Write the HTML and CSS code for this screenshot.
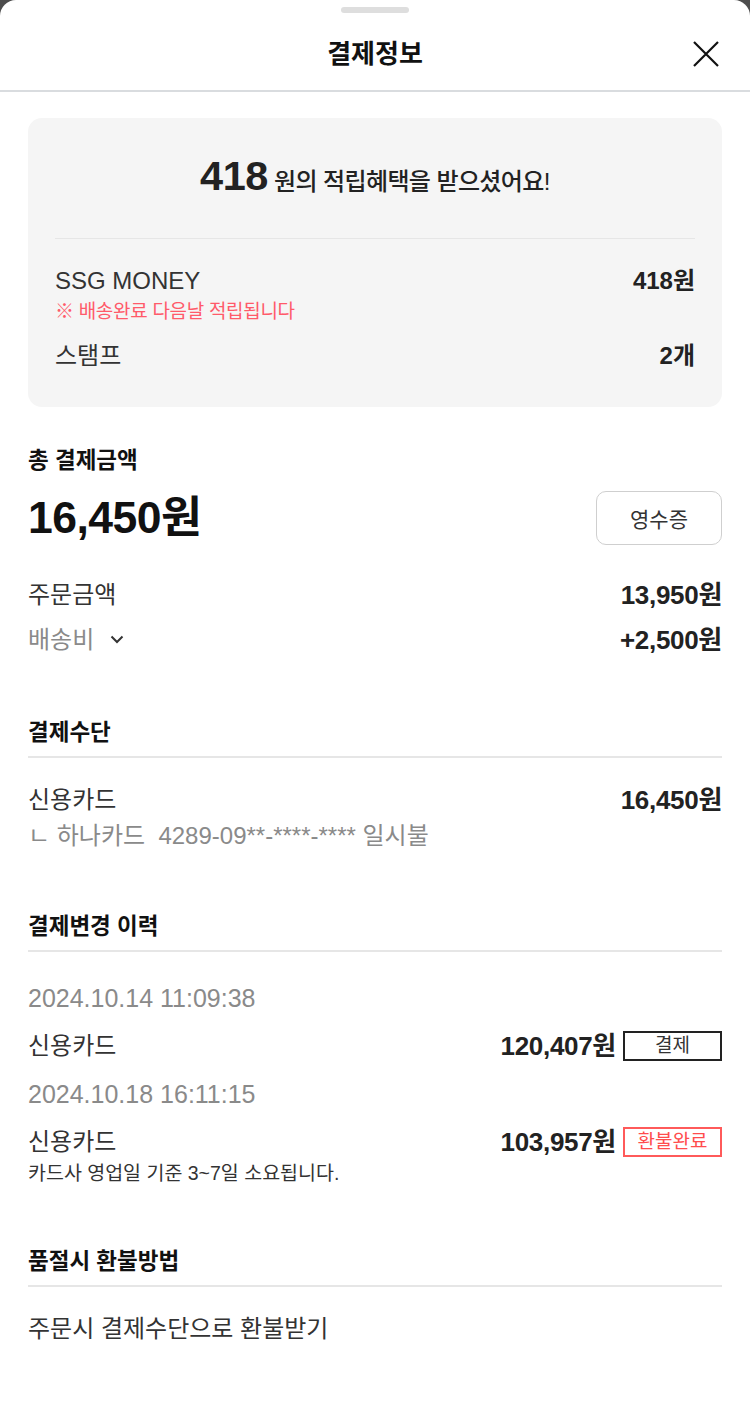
FILE: index.html
```html
<!DOCTYPE html>
<html lang="ko">
<head>
<meta charset="utf-8">
<title>결제정보</title>
<link rel="stylesheet" href="styles.css">
</head>
<body>
<div class="sheet">
  <div class="grip"><span class="grip-bar"></span></div>
  <header class="head">
    <h1 class="head-title">결제정보</h1>
    <button class="close" aria-label="닫기">
      <svg width="28" height="28" viewBox="0 0 28 28"><path d="M2 2 L26 26 M26 2 L2 26" stroke="#111" stroke-width="2.2" fill="none"/></svg>
    </button>
  </header>

  <main class="content">
    <section class="reward">
      <p class="reward-title"><strong>418</strong> 원의 적립혜택을 받으셨어요!</p>
      <div class="reward-line"></div>
      <div class="row r-ssg"><span>SSG MONEY</span><b>418원</b></div>
      <p class="reward-note">※ 배송완료 다음날 적립됩니다</p>
      <div class="row r-stamp"><span>스탬프</span><b>2개</b></div>
    </section>

    <section class="total">
      <h2 class="sec-title plain">총 결제금액</h2>
      <div class="total-row">
        <span class="total-amt">16,450원</span>
        <button class="receipt">영수증</button>
      </div>
      <div class="row big r-order"><span>주문금액</span><b>13,950원</b></div>
      <div class="row big r-ship">
        <span class="muted">배송비 <svg class="chev" width="14" height="9" viewBox="0 0 14 9"><path d="M1.5 1.5 L7 7 L12.5 1.5" stroke="#333" stroke-width="2" fill="none"/></svg></span>
        <b>+2,500원</b>
      </div>
    </section>

    <section class="sec sec-method">
      <h2 class="sec-title">결제수단</h2>
      <div class="row big r-card"><span>신용카드</span><b>16,450원</b></div>
      <p class="card-info">ㄴ 하나카드&nbsp; 4289-09**-****-**** 일시불</p>
    </section>

    <section class="sec sec-history">
      <h2 class="sec-title">결제변경 이력</h2>
      <p class="date d1">2024.10.14 11:09:38</p>
      <div class="row big r-hist"><span>신용카드</span><span class="amt-wrap"><b>120,407원</b><em class="badge">결제</em></span></div>
      <p class="date d2">2024.10.18 16:11:15</p>
      <div class="row big r-hist"><span>신용카드</span><span class="amt-wrap"><b>103,957원</b><em class="badge red">환불완료</em></span></div>
      <p class="hist-note">카드사 영업일 기준 3~7일 소요됩니다.</p>
    </section>

    <section class="sec sec-refund">
      <h2 class="sec-title">품절시 환불방법</h2>
      <p class="refund-text">주문시 결제수단으로 환불받기</p>
    </section>
  </main>
</div>
</body>
</html>
```

FILE: styles.css
```css
* { box-sizing: border-box; margin: 0; padding: 0; }
html, body { height: 100%; }
body {
  background: #4d4d4d;
  font-family: "Liberation Sans", "Noto Sans CJK KR", sans-serif;
  color: #222;
}
.sheet {
  background: #fff;
  border-radius: 16px 16px 0 0;
  min-height: 1424px;
}
.grip { height: 20px; display: flex; justify-content: center; padding-top: 7px; }
.grip-bar { width: 68px; height: 6px; border-radius: 3px; background: #dedede; }
.head {
  height: 72px;
  display: flex;
  align-items: center;
  justify-content: center;
  position: relative;
  border-bottom: 2px solid #d9dcdf;
}
.head-title { font-size: 26px; font-weight: 700; line-height: 32px; margin-top: -2px; color: #111; }
.close {
  position: absolute;
  right: 30px;
  top: 20px;
  border: 0;
  background: none;
  width: 28px;
  height: 28px;
  display: block;
}
.close svg { display: block; }

.content { padding: 26px 28px 0; }

.reward {
  background: #f5f5f5;
  border-radius: 14px;
  padding: 37px 27px 36px;
}
.reward-title {
  text-align: center;
  font-size: 24px;
  font-weight: 500;
  line-height: 50px;
  height: 50px;
  letter-spacing: -0.6px;
  color: #222;
}
.reward-title strong { font-size: 41.5px; line-height: 1; font-weight: 700; letter-spacing: -0.5px; }
.reward-line { height: 1px; background: #e6e6e6; margin-top: 33px; }

.row {
  display: flex;
  justify-content: space-between;
  align-items: center;
  font-size: 24px;
  line-height: 30px;
  color: #333;
}
.row b { font-weight: 700; color: #222; }
.row.big b { font-size: 26px; letter-spacing: -0.3px; }
.r-ssg { margin-top: 27px; }
.reward-note { color: #ff5a6a; font-size: 19px; line-height: 24px; margin-top: 4px; letter-spacing: -0.3px; }
.r-stamp { margin-top: 17px; }

.total { padding-top: 40px; }
.sec-title {
  font-size: 22.5px;
  font-weight: 700;
  line-height: 28px;
  color: #111;
  padding-bottom: 9px;
  border-bottom: 2px solid #e6e6e6;
}
.sec-title.plain { border-bottom: 0; padding-bottom: 0; }
.total-row {
  margin-top: 16px;
  height: 54px;
  display: flex;
  justify-content: space-between;
  align-items: center;
}
.total-amt { font-size: 44.5px; font-weight: 700; letter-spacing: -0.5px; color: #111; line-height: 50px; }
.receipt {
  width: 126px;
  height: 54px;
  border: 1.5px solid #cfcfcf;
  border-radius: 10px;
  background: #fff;
  font-family: inherit;
  font-size: 21px;
  color: #333;
}
.r-order { margin-top: 35px; }
.r-ship { margin-top: 15px; }
.muted { color: #8a8a8a; display: inline-flex; align-items: center; gap: 16px; }
.chev { display: block; margin-top: -2px; }

.sec { padding-top: 64px; }
.r-card { margin-top: 27px; }
.card-info { font-size: 24px; line-height: 26px; color: #8a8a8a; margin-top: 8px; }

.date { font-size: 25px; line-height: 30px; color: #8a8a8a; }
.d1 { margin-top: 31px; }
.d2 { margin-top: 18px; }
.r-hist { margin-top: 18px; }
.amt-wrap { display: inline-flex; align-items: center; gap: 7px; }
.badge {
  font-style: normal;
  width: 99px;
  height: 30px;
  border: 2px solid #222;
  font-size: 19px;
  line-height: 26px;
  text-align: center;
  color: #333;
}
.badge.red { border-color: #ff5a5a; color: #ff4d4d; }
.hist-note { font-size: 19.5px; line-height: 22px; color: #333; margin-top: 5px; }

.refund-text { font-size: 24px; line-height: 30px; color: #333; margin-top: 27px; }
```
